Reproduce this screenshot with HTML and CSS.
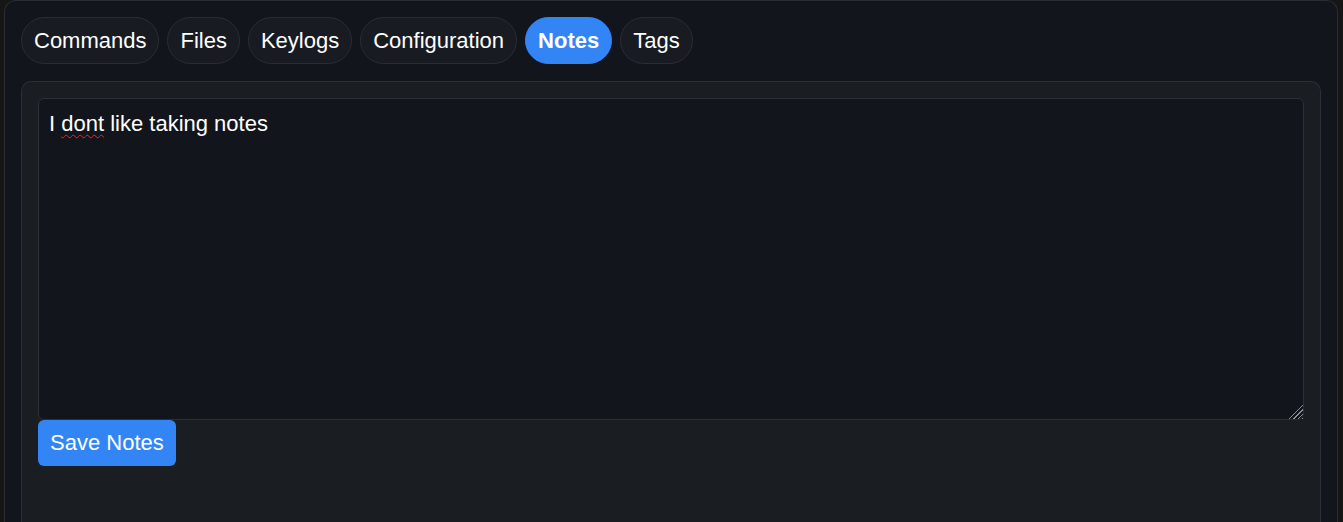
FILE: index.html
```html
<!DOCTYPE html>
<html lang="en">
<head>
<meta charset="utf-8">
<title>Notes</title>
<link rel="stylesheet" href="styles.css">
</head>
<body>
<div class="panel">
  <nav class="tabs">
    <button class="tab">Commands</button>
    <button class="tab">Files</button>
    <button class="tab">Keylogs</button>
    <button class="tab">Configuration</button>
    <button class="tab active">Notes</button>
    <button class="tab">Tags</button>
  </nav>
  <section class="card">
    <div class="notes" role="textbox" aria-multiline="true" contenteditable="true">I <span class="misspelled">dont</span> like taking notes</div>
    <button class="save">Save Notes</button>
  </section>
</div>
</body>
</html>
```
FILE: styles.css
```css
html, body {
  margin: 0;
  padding: 0;
  background: #161616;
  color-scheme: dark;
  font-family: "Liberation Sans", Arial, sans-serif;
  color: #fff;
}
body {
  padding: 0 5px 0 4px;
  height: 522px;
  overflow: hidden;
  box-sizing: border-box;
}
.panel {
  display: flex;
  flex-direction: column;
  background: #12161c;
  border: 1px solid #2a2e34;
  border-bottom: none;
  border-radius: 12px 12px 0 0;
  padding: 16px 16px 0 16px;
  height: 522px;
  box-sizing: border-box;
}
.tabs {
  display: flex;
  gap: 8px;
}
.tab {
  font-family: inherit;
  font-size: 22px;
  line-height: 25px;
  color: #fff;
  background: #181c22;
  border: 1px solid #2a2e34;
  border-radius: 24px;
  padding: 10px 12px 10px;
  height: 47px;
  cursor: pointer;
}
.tab.active {
  background: #3385f6;
  border-color: #3385f6;
  font-weight: bold;
}
.card {
  flex: 1;
  margin-top: 17px;
  background: #1a1e23;
  border: 1px solid #2b3036;
  border-bottom: none;
  border-radius: 10px 10px 0 0;
  padding: 16px 16px 0;
  box-sizing: border-box;
}
.notes {
  display: block;
  box-sizing: border-box;
  width: 100%;
  height: 322px;
  background: #12161c;
  border: 1px solid #2b3036;
  border-radius: 6px;
  padding: 12px 10px;
  font-size: 22px;
  line-height: 25px;
  color: #fff;
  overflow: auto;
  resize: vertical;
  outline: none;
}
.notes::-webkit-resizer {
  background:
    linear-gradient(135deg, #12161c 50%, transparent 50%),
    repeating-linear-gradient(135deg, transparent 0 2px, #8a8d92 2px 3px);
}
.misspelled {
  text-decoration: underline wavy #e8262a;
  text-decoration-thickness: 1px;
  text-underline-offset: 3px;
}
.save {
  display: block;
  font-family: inherit;
  font-size: 22px;
  line-height: 26px;
  color: #fff;
  background: #3385f6;
  border: none;
  border-radius: 6px;
  padding: 10px 12px;
  cursor: pointer;
}
```
